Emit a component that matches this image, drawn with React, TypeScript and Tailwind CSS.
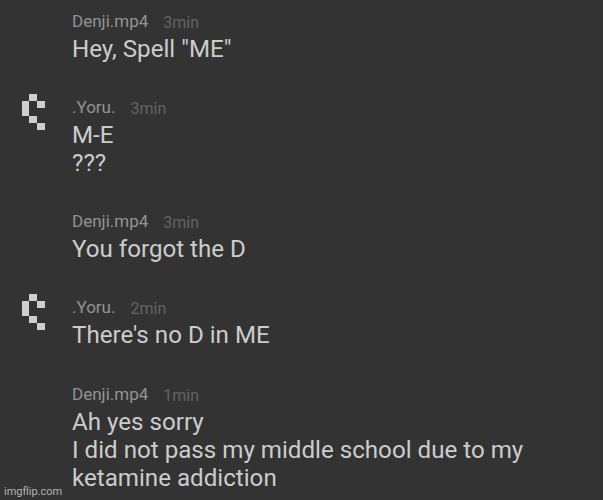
import React from "react";

function Avatar() {
  return (
    <svg className="ml-[22px] h-[37px] w-[23px] shrink-0" viewBox="0 0 23 37" shapeRendering="crispEdges" fill="#cecece">
      <rect x="7" y="0" width="8" height="7" />
      <rect x="15" y="7" width="8" height="7" />
      <rect x="0" y="7" width="7" height="15" />
      <rect x="7" y="22" width="8" height="7" />
      <rect x="15" y="29" width="8" height="7" />
    </svg>
  );
}

type MessageProps = { name: string; time: string; lines: string[]; avatar?: boolean; height: string };

function Message({ name, time, lines, avatar, height }: MessageProps) {
  return (
    <article className={`flex shrink-0 ${height}`}>
      <div className="w-[72px] shrink-0 pt-[1px]">{avatar && <Avatar />}</div>
      <div className="min-w-0 whitespace-nowrap">
        <header className="flex h-[28px] text-[17px] leading-[28px] text-[#939393]">
          <span>{name}</span>
          <time className="ml-[15px] pt-[2px] text-[16px] text-[#646464]">{time}</time>
        </header>
        {lines.map((line) => (
          <p key={line} className="h-[28px] text-[24.15px] leading-[28.5px]">
            {line}
          </p>
        ))}
      </div>
    </article>
  );
}

export default function App() {
  return (
    <main className="flex h-[500px] w-[603px] flex-col overflow-hidden bg-[#333333] pt-[7px] font-['Roboto',sans-serif] text-[#cccccc]">
      <Message name="Denji.mp4" time="3min" height="h-[86px]" lines={['Hey, Spell "ME"']} />
      <Message name=".Yoru." time="3min" height="h-[114px]" avatar lines={["M-E", "???"]} />
      <Message name="Denji.mp4" time="3min" height="h-[86px]" lines={["You forgot the D"]} />
      <Message name=".Yoru." time="2min" height="h-[87px]" avatar lines={["There's no D in ME"]} />
      <Message
        name="Denji.mp4"
        time="1min"
        height="h-[105px]"
        lines={["Ah yes sorry", "I did not pass my middle school due to my", "ketamine addiction"]}
      />
      <footer className="ml-[4px] text-[11px] leading-[14px] text-[#b4b4b4]">imgflip.com</footer>
    </main>
  );
}
